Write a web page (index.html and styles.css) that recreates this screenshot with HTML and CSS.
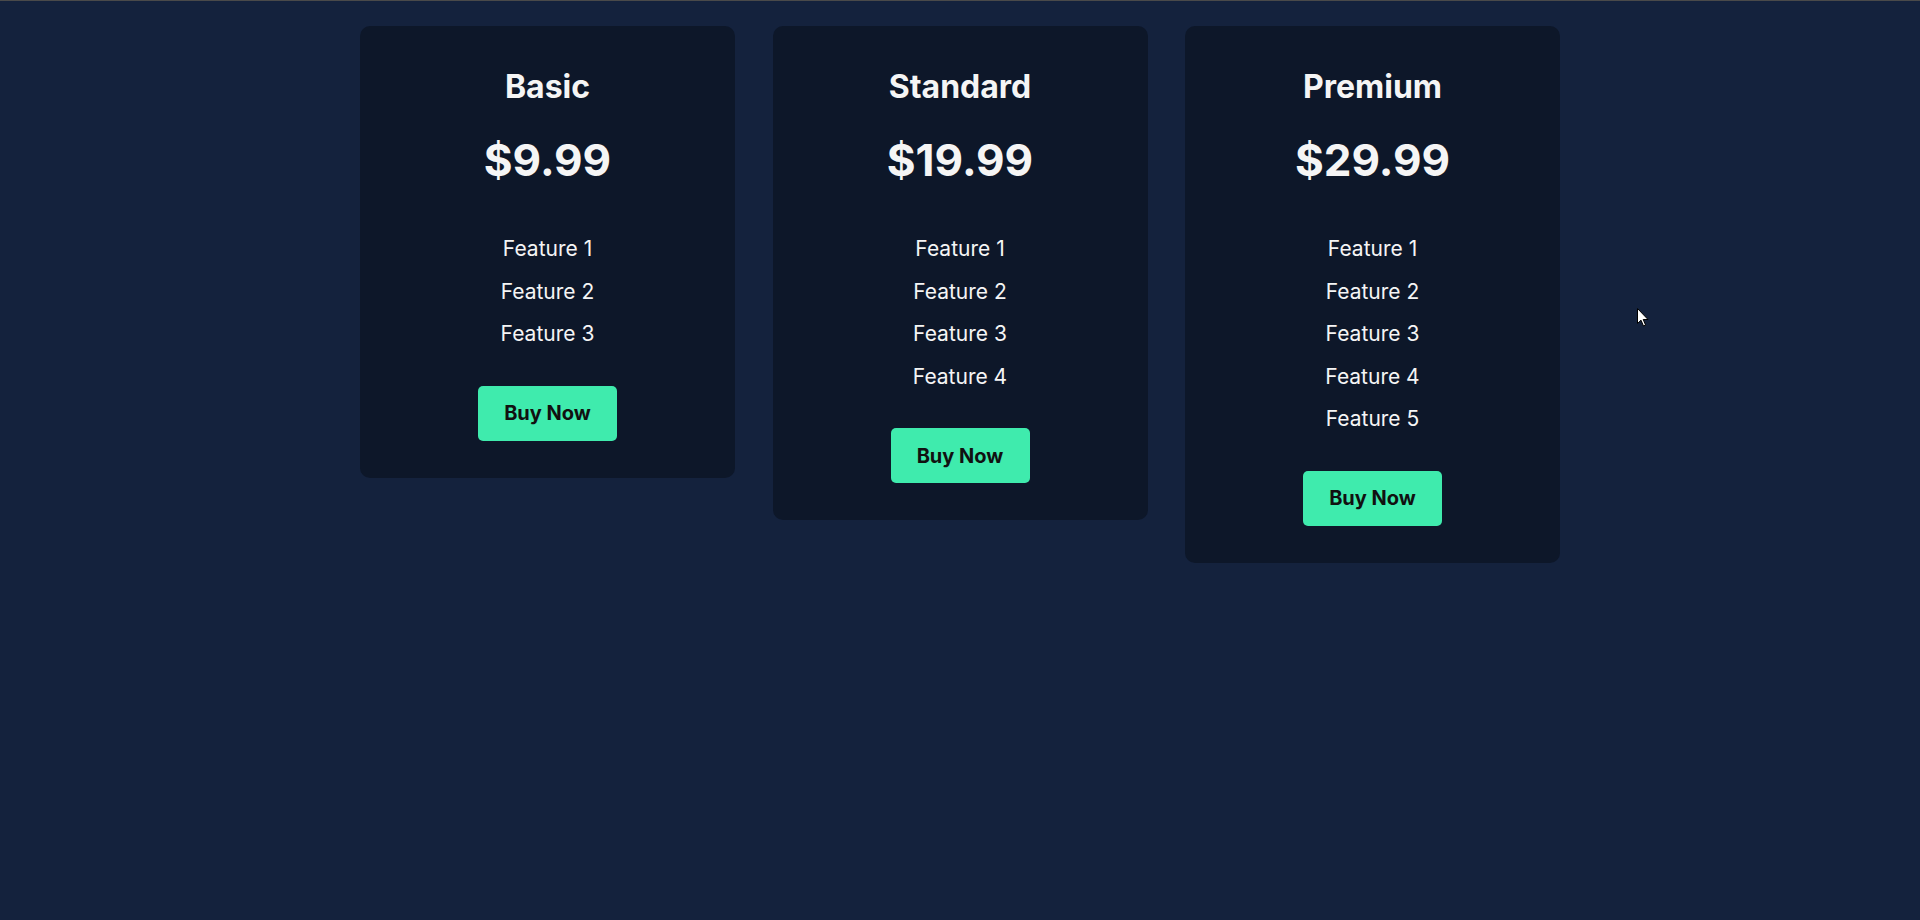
FILE: index.html
```html
<!DOCTYPE html>
<html lang="en">
<head>
<meta charset="utf-8">
<title>Pricing</title>
<link rel="stylesheet" href="styles.css">
</head>
<body>
<main class="pricing">
  <section class="card">
    <h2 class="plan">Basic</h2>
    <p class="price">$9.99</p>
    <ul class="features">
      <li>Feature 1</li>
      <li>Feature 2</li>
      <li>Feature 3</li>
    </ul>
    <button class="buy">Buy Now</button>
  </section>
  <section class="card">
    <h2 class="plan">Standard</h2>
    <p class="price">$19.99</p>
    <ul class="features">
      <li>Feature 1</li>
      <li>Feature 2</li>
      <li>Feature 3</li>
      <li>Feature 4</li>
    </ul>
    <button class="buy">Buy Now</button>
  </section>
  <section class="card">
    <h2 class="plan">Premium</h2>
    <p class="price">$29.99</p>
    <ul class="features">
      <li>Feature 1</li>
      <li>Feature 2</li>
      <li>Feature 3</li>
      <li>Feature 4</li>
      <li>Feature 5</li>
    </ul>
    <button class="buy">Buy Now</button>
  </section>
</main>
<svg class="cursor" width="12" height="19" viewBox="0 0 12 19" xmlns="http://www.w3.org/2000/svg">
  <path d="M0.5 0.5 L0.5 15.5 L4 12.2 L6.5 18 L8.6 17.1 L6.2 11.5 L11 11.5 Z" fill="#fff" stroke="#000" stroke-width="1"/>
</svg>
</body>
</html>
```

FILE: styles.css
```css
html, body {
  margin: 0;
  padding: 0;
}
html {
  height: 100%;
  overflow: hidden;
}
body {
  box-sizing: border-box;
  height: 100%;
  background: #14223d;
  border-top: 1px solid #4a4a4a;
  font-family: Inter, "Noto Sans", sans-serif;
  color: #f5f5f5;
}
.pricing {
  display: flex;
  justify-content: center;
  align-items: flex-start;
  gap: 37.5px;
  padding-top: 25px;
}
.card {
  width: 375px;
  box-sizing: border-box;
  background: #0d1729;
  border-radius: 10px;
  padding: 44px 30px 37px;
  display: flex;
  flex-direction: column;
  align-items: center;
  text-align: center;
}
.plan {
  margin: 0;
  font-size: 32px;
  line-height: 34px;
  font-weight: 700;
}
.price {
  margin: 27px 0 0;
  font-size: 44px;
  line-height: 58px;
  font-weight: 700;
}
.features {
  list-style: none;
  margin: 38px 0 0;
  padding: 0;
  font-size: 21px;
  line-height: 42.5px;
  font-weight: 400;
}
.features li {
  position: relative;
  top: 1px;
}
.buy {
  margin-top: 31px;
  width: 139px;
  height: 55px;
  border: none;
  border-radius: 5px;
  background: #3febad;
  color: #111;
  font-family: inherit;
  font-size: 20px;
  font-weight: 700;
  padding: 0;
}
.cursor {
  position: absolute;
  left: 1637px;
  top: 308px;
}
```
